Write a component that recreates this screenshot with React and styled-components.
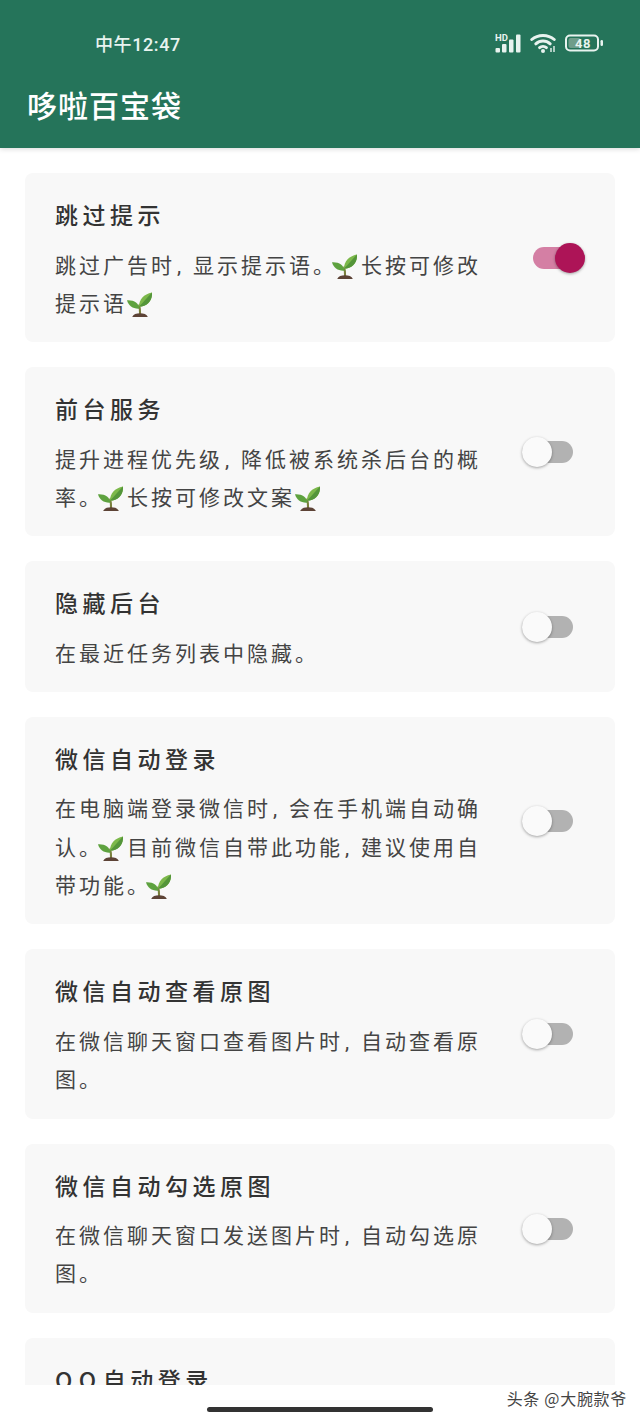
import React from "react";
import styled, { createGlobalStyle } from "styled-components";

const Global = createGlobalStyle`
  html, body { margin: 0; padding: 0; background: #fff; }
  body { font-family: "Noto Sans CJK SC", "Noto Sans", sans-serif; }
  * { box-sizing: border-box; }
`;

const Page = styled.div`
  position: relative;
  width: 640px;
  height: 1422px;
  overflow: hidden;
  background: #fff;
  display: flex;
  flex-direction: column;
`;

const Header = styled.header`
  flex: none;
  height: 148px;
  background: #25745a;
  display: flex;
  flex-direction: column;
  box-shadow: 0 1px 5px rgba(0, 0, 0, 0.16);
  position: relative;
  z-index: 1;
`;

const StatusBar = styled.div`
  height: 86px;
  padding: 0 36px 0 95px;
  display: flex;
  align-items: center;
  justify-content: space-between;
  color: #e8f3ef;
`;

const Clock = styled.span`
  font-family: "Roboto", "Noto Sans CJK SC", sans-serif;
  font-size: 18px;
  font-weight: 500;
  letter-spacing: 0.6px;
`;

const StatusIcons = styled.div`
  display: flex;
  align-items: center;
  gap: 8px;
`;

const AppTitle = styled.h1`
  margin: 0;
  padding-left: 27px;
  font-size: 30px;
  line-height: 36px;
  font-weight: 500;
  letter-spacing: 1px;
  color: #fff;
`;

const Content = styled.main`
  flex: none;
  height: 1237px;
  overflow: hidden;
  padding: 25px 25px 0;
  display: flex;
  flex-direction: column;
  gap: 25px;
`;

const Card = styled.section`
  flex: none;
  min-height: ${(p) => (p.$tall ? "169px" : "0")};
  background: #f8f8f8;
  border-radius: 8px;
  padding-left: 30px;
  display: flex;
  align-items: center;
  justify-content: space-between;
`;

const CardText = styled.div`
  width: 436px;
  align-self: flex-start;
  padding: 26px 0 20.8px;
`;

const CardTitle = styled.h2`
  margin: 0 0 15.5px;
  font-size: 23px;
  line-height: 30px;
  font-weight: 500;
  letter-spacing: 4.5px;
  color: #333;
`;

const Latin = styled.span`
  letter-spacing: 6.5px;
`;

const CardDesc = styled.p`
  margin: 0;
  font-size: 21px;
  line-height: 38.4px;
  letter-spacing: 3px;
  color: #444;
`;

const Comma = styled.span`
  display: inline-block;
  width: 18px;
  padding-left: 2px;
  line-height: 1;
  font-family: "Roboto", sans-serif;
  letter-spacing: 0;
`;

const Period = styled.span`
  display: inline-block;
  width: 19px;
  line-height: 1;
  letter-spacing: 0;
`;

const Sprout = styled.svg`
  width: 25px;
  height: 25px;
  margin: -6px 4px -6px 0;
  vertical-align: baseline;
`;

const Switch = styled.div`
  position: relative;
  flex: none;
  width: ${(p) => (p.$on ? "52px" : "51px")};
  height: 30px;
  margin-top: 1px;
  margin-right: ${(p) => (p.$on ? "30px" : "42px")};
`;

const Track = styled.div`
  position: absolute;
  top: 4px;
  left: 0;
  right: ${(p) => (p.$on ? "6px" : "0")};
  height: 22px;
  border-radius: 11px;
  background: ${(p) => (p.$on ? "#d47fa4" : "#b2b2b2")};
`;

const Knob = styled.div`
  position: absolute;
  top: 0;
  ${(p) => (p.$on ? "right: 0;" : "left: 0;")}
  width: 30px;
  height: 30px;
  border-radius: 50%;
  background: ${(p) => (p.$on ? "#ad1457" : "#fafafa")};
  box-shadow: 0 1px 3px rgba(0, 0, 0, 0.35);
`;

const HomeBar = styled.div`
  position: absolute;
  left: 207px;
  top: 1407px;
  width: 226px;
  height: 5px;
  border-radius: 3px;
  background: #333;
`;

const Watermark = styled.div`
  position: absolute;
  right: 13px;
  top: 1387px;
  font-size: 16px;
  line-height: 22px;
  letter-spacing: 0.7px;
  color: #444;
`;

const C = () => <Comma>,</Comma>;
const D = () => <Period>。</Period>;

const Seedling = () => (
  <Sprout viewBox="0 0 24 24" aria-hidden="true">
    <path d="M12.6 22C12.6 18 12.4 15 11.6 12" stroke="#7a7f3c" strokeWidth="2" fill="none" />
    <path d="M11.5 14C11.5 7.5 16 2 24 0.5C24.5 8 19.5 14 11.5 14Z" fill="#7cb84a" />
    <path d="M11.5 14C15 10.5 19 6 24 0.5C24.5 8 19.5 14 11.5 14Z" fill="#54953a" />
    <path d="M12 16C11.5 11 6.5 7.5 0 8C1.5 13.5 6 16.5 12 16Z" fill="#5ea23f" />
    <path d="M5 24C6 21.5 9 20.5 12.5 20.5C16 20.5 19 21.5 20 24Z" fill="#5d4336" />
  </Sprout>
);

const Signal = () => (
  <svg width="27" height="20" viewBox="0 0 27 20" aria-hidden="true">
    <text x="0" y="8" fontFamily="Roboto, sans-serif" fontSize="9.5" fontWeight="700" fill="#e8f3ef">HD</text>
    <g fill="#e8f3ef">
      <rect x="0.5" y="15" width="4.5" height="4.5" rx="1" />
      <rect x="7" y="11" width="4.5" height="8.5" rx="1" />
      <rect x="14" y="6.5" width="4.5" height="13" rx="1" />
      <rect x="21" y="1.5" width="4.5" height="18" rx="1" />
    </g>
  </svg>
);

const Wifi = () => (
  <svg width="27" height="20" viewBox="0 0 27 20" aria-hidden="true">
    <g fill="none" stroke="#e8f3ef" strokeWidth="3" strokeLinecap="round">
      <path d="M1.8 6.5C8 1 18 1 24.2 6.5" />
      <path d="M5.8 10.8C10 7 16 7 20.2 10.8" />
      <path d="M9.6 14.6C11.5 13 14.5 13 16.4 14.6" />
    </g>
    <circle cx="13" cy="18" r="2" fill="#e8f3ef" />
    <path d="M21 15v4M24 13v6" stroke="#e8f3ef" strokeWidth="1.4" />
  </svg>
);

const Battery = () => (
  <svg width="39" height="18" viewBox="0 0 39 18" aria-hidden="true">
    <rect x="1" y="1.5" width="32" height="15" rx="4" fill="none" stroke="#e8f3ef" strokeWidth="2" />
    <rect x="3.5" y="4" width="12" height="10" rx="2" fill="#6f9d8a" />
    <rect x="35.5" y="6" width="2.5" height="6" rx="1.2" fill="#e8f3ef" />
    <text x="18" y="14" textAnchor="middle" fontFamily="Roboto, sans-serif" fontSize="13" fontWeight="700" fill="#e8f3ef" letterSpacing="0.5">48</text>
  </svg>
);

const cards = [
  { id: "skip", title: "跳过提示", on: true, desc: <>跳过广告时<C />显示提示语<D /><Seedling />长按可修改提示语<Seedling /></> },
  { id: "fg", title: "前台服务", desc: <>提升进程优先级<C />降低被系统杀后台的概率<D /><Seedling />长按可修改文案<Seedling /></> },
  { id: "hide", title: "隐藏后台", desc: <>在最近任务列表中隐藏<D /></> },
  { id: "wxlogin", title: "微信自动登录", desc: <>在电脑端登录微信时<C />会在手机端自动确认<D /><Seedling />目前微信自带此功能<C />建议使用自带功能<D /><Seedling /></> },
  { id: "wxview", title: "微信自动查看原图", desc: <>在微信聊天窗口查看图片时<C />自动查看原图<D /></> },
  { id: "wxpick", title: "微信自动勾选原图", desc: <>在微信聊天窗口发送图片时<C />自动勾选原图<D /></> },
  { id: "qq", title: <><Latin>QQ</Latin>自动登录</>, tall: true },
];

export default function App() {
  return (
    <Page>
      <Global />
      <Header>
        <StatusBar>
          <Clock>中午12:47</Clock>
          <StatusIcons>
            <Signal />
            <Wifi />
            <Battery />
          </StatusIcons>
        </StatusBar>
        <AppTitle>哆啦百宝袋</AppTitle>
      </Header>
      <Content>
        {cards.map((c) => (
          <Card key={c.id} $tall={c.tall}>
            <CardText>
              <CardTitle>{c.title}</CardTitle>
              {c.desc && <CardDesc>{c.desc}</CardDesc>}
            </CardText>
            <Switch $on={c.on}>
              <Track $on={c.on} />
              <Knob $on={c.on} />
            </Switch>
          </Card>
        ))}
      </Content>
      <HomeBar />
      <Watermark>头条 @大腕款爷</Watermark>
    </Page>
  );
}
